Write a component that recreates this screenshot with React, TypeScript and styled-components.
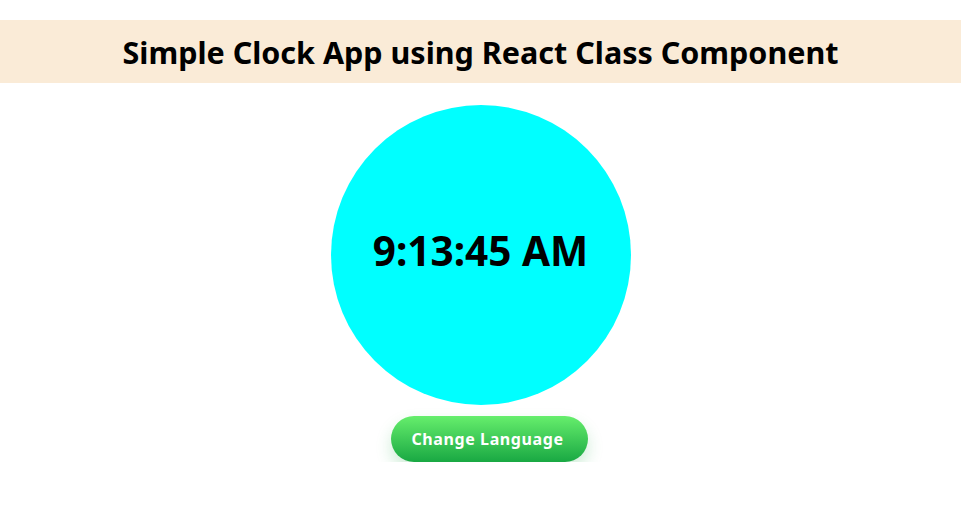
import * as React from 'react';
import styled, { createGlobalStyle } from 'styled-components';

const GlobalStyle = createGlobalStyle`
  html, body {
    margin: 0;
    padding: 0;
    background: #ffffff;
    font-family: "Noto Sans", sans-serif;
  }
`;

const Page = styled.div`
  display: flex;
  flex-direction: column;
  align-items: center;
  padding-top: 20px;
`;

const Header = styled.header`
  align-self: stretch;
  height: 63px;
  display: flex;
  align-items: center;
  justify-content: center;
  background-color: #faebd7;
`;

const Title = styled.h1`
  margin: 0;
  font-family: "Noto Sans", sans-serif;
  font-size: 30.5px;
  font-weight: 700;
  color: #000;
`;

const Face = styled.div`
  margin-top: 22px;
  width: 300px;
  height: 300px;
  border-radius: 50%;
  background-color: #00ffff;
  display: flex;
  align-items: center;
  justify-content: center;
`;

const Time = styled.h2`
  margin: -10px 0 0;
  font-family: "Noto Sans", sans-serif;
  font-size: 40.5px;
  font-weight: 700;
  color: #000;
`;

const LangButton = styled.button`
  margin: 11px 0 0 18px;
  width: 197px;
  height: 46px;
  padding: 0 4px 0 0;
  border: none;
  border-radius: 23px;
  background: linear-gradient(to bottom, #66ee6c, #19a843);
  box-shadow: 0 8px 16px rgba(30, 170, 70, 0.22);
  color: #ffffff;
  font-family: "Noto Sans", sans-serif;
  font-size: 16px;
  font-weight: 700;
  letter-spacing: 0.6px;
  cursor: pointer;
`;

class Clock extends React.Component<{}, { lang: string }> {
  state = { lang: 'en' };

  toggle = () => {
    this.setState({ lang: this.state.lang === 'en' ? 'fr' : 'en' });
  };

  render() {
    return (
      <Page>
        <Header>
          <Title>Simple Clock App using React Class Component</Title>
        </Header>
        <Face>
          <Time>9:13:45 AM</Time>
        </Face>
        <LangButton onClick={this.toggle}>Change Language</LangButton>
      </Page>
    );
  }
}

export default function App() {
  return (
    <>
      <GlobalStyle />
      <Clock />
    </>
  );
}
